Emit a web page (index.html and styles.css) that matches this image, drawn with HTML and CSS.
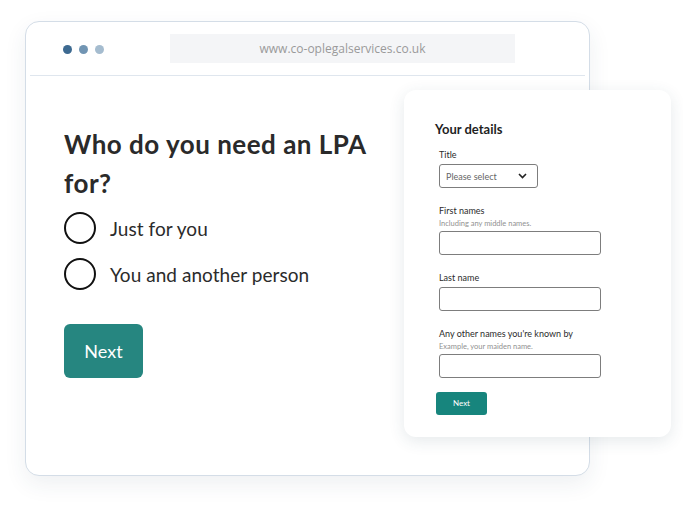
FILE: index.html
```html
<!DOCTYPE html>
<html lang="en">
<head>
<meta charset="utf-8">
<title>Who do you need an LPA for?</title>
<link rel="stylesheet" href="styles.css">
</head>
<body>
<div class="stage">
  <div class="browser">
    <div class="chrome">
      <div class="dots">
        <span class="dot dot-1"></span>
        <span class="dot dot-2"></span>
        <span class="dot dot-3"></span>
      </div>
      <div class="url">www.co-oplegalservices.co.uk</div>
    </div>
    <div class="page">
      <h1 class="question">Who do you need an LPA<br>for?</h1>
      <div class="options">
        <label class="option"><span class="radio"></span><span>Just for you</span></label>
        <label class="option"><span class="radio"></span><span>You and another person</span></label>
      </div>
      <button class="btn-next">Next</button>
    </div>
  </div>

  <div class="card">
    <h2 class="card-title">Your details</h2>
    <div class="field">
      <div class="label">Title</div>
      <div class="select"><span>Please select</span>
        <svg class="chev" width="9" height="6" viewBox="0 0 9 6"><path d="M1 1l3.5 3.5L8 1" fill="none" stroke="#222" stroke-width="1.6"/></svg>
      </div>
    </div>
    <div class="field">
      <div class="label">First names</div>
      <div class="hint">Including any middle names.</div>
      <div class="input"></div>
    </div>
    <div class="field">
      <div class="label">Last name</div>
      <div class="input"></div>
    </div>
    <div class="field field-last">
      <div class="label">Any other names you're known by</div>
      <div class="hint">Example, your maiden name.</div>
      <div class="input"></div>
    </div>
    <button class="btn-small">Next</button>
  </div>
</div>
</body>
</html>
```
FILE: styles.css
```css
* { box-sizing: border-box; }
html, body { margin: 0; padding: 0; background: #ffffff; }
body { font-family: Lato, "Noto Sans", sans-serif; color: #2b2b2b; }

.stage { position: relative; width: 683px; height: 505px; padding: 21px 0 0 25px; }

.browser {
  width: 565px; height: 455px;
  border: 1px solid #d4dde7; border-radius: 14px;
  background: #fff;
  box-shadow: 0 8px 22px rgba(40, 60, 90, 0.08);
  display: flex; flex-direction: column;
}
.chrome {
  height: 54px; margin: 0 4px;
  border-bottom: 1px solid #dfe6ee;
  display: flex; align-items: center; padding: 0 0 0 33px;
}
.dots { display: flex; gap: 7px; width: 107px; margin-top: 2px; }
.dot { width: 9px; height: 9px; border-radius: 50%; }
.dot-1 { background: #3d6a91; }
.dot-2 { background: #7195b3; }
.dot-3 { background: #a5bccf; }
.url {
  width: 345px; height: 29px; background: #f4f5f7;
  display: flex; align-items: center; justify-content: center;
  font-family: "Open Sans", sans-serif; font-size: 12px; color: #9a9a9a;
}

.page { padding: 49px 0 0 38px; }
.question { margin: 0; font-size: 26px; font-weight: 700; line-height: 39px; letter-spacing: 0.5px; color: #2a2a2a; }
.options { display: flex; flex-direction: column; gap: 14px; margin-top: 9px; }
.option { display: flex; align-items: center; gap: 14px; font-size: 19px; letter-spacing: 0.05px; color: #2b2b2b; }
.radio { width: 32px; height: 32px; border: 2px solid #111; border-radius: 50%; }
.btn-next {
  margin-top: 34px; width: 79px; height: 54px;
  background: #268680; color: #fff; border: 0; border-radius: 6px;
  font-family: Lato, sans-serif; font-size: 18px;
}

.card {
  position: absolute; left: 404px; top: 90px;
  width: 267px; height: 347px;
  background: #fff; border-radius: 12px;
  box-shadow: 0 4px 16px rgba(40, 70, 90, 0.12);
  padding: 31px 0 0 31px;
}
.card-title { margin: 0 0 12px; font-size: 13px; font-weight: 700; color: #1f1f1f; }
.field { margin-left: 4px; margin-bottom: 17px; }
.field-last { margin-bottom: 12px; }
.label { font-size: 9px; color: #2b2b2b; margin-bottom: 4px; }
.hint { font-size: 7.5px; color: #919191; margin-top: -1px; margin-bottom: 3px; }
.select {
  width: 99px; height: 24px; border: 1px solid #7d7d7d; border-radius: 3px;
  display: flex; align-items: center; justify-content: space-between;
  padding: 0 10px 0 6px; font-size: 9px; color: #666;
}
.input { width: 162px; height: 24px; border: 1px solid #7d7d7d; border-radius: 3px; }
.btn-small {
  margin-left: 1px;
  width: 51px; height: 23px; background: #17857d; color: #fff;
  border: 0; border-radius: 3px; font-family: Lato, sans-serif; font-size: 8px;
}
```
